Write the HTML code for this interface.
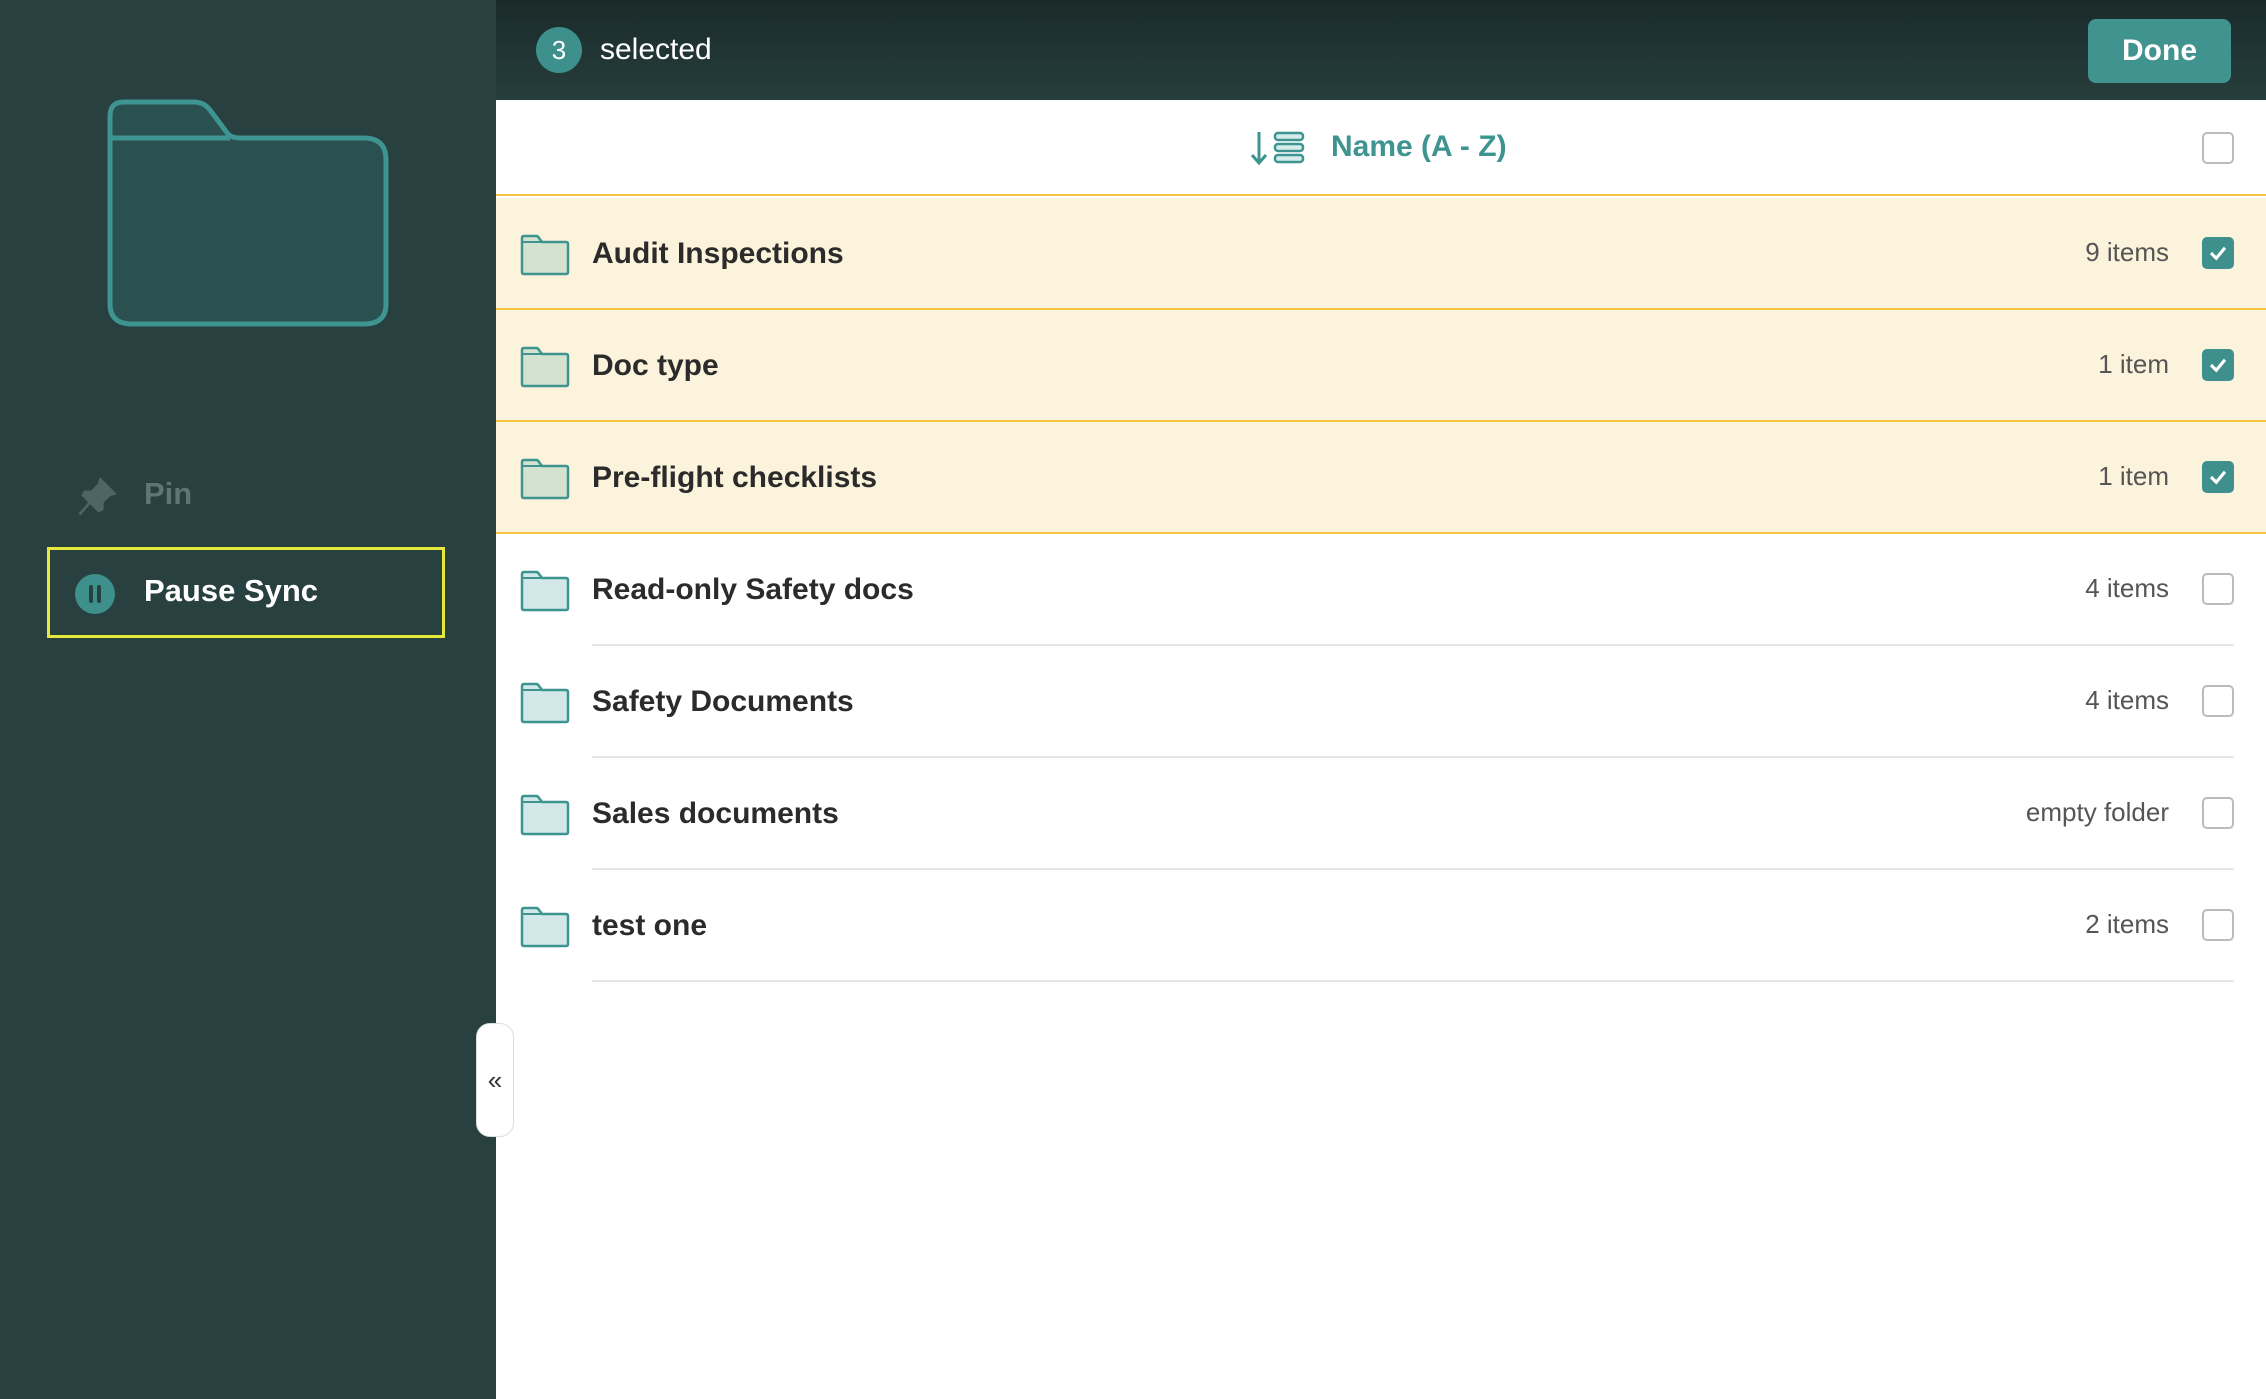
<!DOCTYPE html>
<html><head><meta charset="utf-8"><style>
*{margin:0;padding:0;box-sizing:border-box}
body{width:2266px;height:1399px;overflow:hidden;font-family:"Liberation Sans",sans-serif;background:#fff;position:relative}
.side{position:absolute;left:0;top:0;width:496px;height:1399px;background:#28403f}
.hdr{position:absolute;left:496px;top:0;width:1770px;height:100px;background:linear-gradient(#1a2a29,#263e3d)}
.abs{position:absolute}
.row{position:absolute;left:496px;width:1770px;height:112px}
.sel{background:#fcf3dc;border-bottom:2px solid #f5c242}
.name{position:absolute;left:96px;top:0;line-height:112px;font-size:30px;font-weight:bold;color:#2b2b2b}
.cnt{position:absolute;right:97px;top:0;line-height:108px;font-size:26px;color:#555}
.cb{position:absolute;left:1706px;top:39px;width:32px;height:32px;border-radius:5px;border:2px solid #bbb;background:#fff}
.cb.on{background:#3e908c;border-color:#3e908c}
.fold{position:absolute;left:24px;top:36px}
.sep{position:absolute;left:96px;right:32px;bottom:0;height:2px;background:#e6e6e6}
</style></head><body>
<div class="side">
<svg class="abs" style="left:104px;top:98px" width="290" height="232" viewBox="0 0 290 232"><path d="M6 58 V18 Q6 4 20 4 H90 Q100 4 106 12 L124 36 Q128 40 136 40 H260 Q282 40 282 62 V206 Q282 226 260 226 H28 Q6 226 6 206 Z" fill="#2a5150" stroke="#3e9490" stroke-width="5"/><path d="M6 40 H126" stroke="#3e9490" stroke-width="5"/></svg>
<svg class="abs" style="left:76px;top:476px" width="42" height="42" viewBox="0 0 24 24"><path d="M14 2 L22 10 L19 11 L15 15 L15 19 L13 20 L4 11 L5 9 L9 9 L13 5 Z M8 15 L2 22" fill="#4d6664" stroke="#4d6664" stroke-width="1.5"/></svg>
<div class="abs" style="left:144px;top:476px;font-size:31px;color:#5d7674;font-weight:bold">Pin</div>
<div class="abs" style="left:47px;top:547px;width:398px;height:91px;border:3px solid #e6e83a"></div>
<div class="abs" style="left:75px;top:574px;width:40px;height:40px;border-radius:50%;background:#3e908c"></div>
<div class="abs" style="left:89px;top:585px;width:4px;height:18px;background:#28403f;border-radius:2px"></div>
<div class="abs" style="left:97px;top:585px;width:4px;height:18px;background:#28403f;border-radius:2px"></div>
<div class="abs" style="left:144px;top:573px;font-size:31px;color:#fff;font-weight:bold">Pause Sync</div>
</div>
<div class="hdr">
<div class="abs" style="left:40px;top:27px;width:46px;height:46px;border-radius:50%;background:#3e908c;color:#fff;font-size:26px;text-align:center;line-height:46px">3</div>
<div class="abs" style="left:104px;top:33px;font-size:30px;color:#fff">selected</div>
<div class="abs" style="left:1592px;top:19px;width:143px;height:64px;border-radius:8px;background:#41938f;color:#fff;font-size:30px;font-weight:bold;text-align:center;line-height:64px">Done</div>
</div>
<div class="abs" style="left:496px;top:100px;width:1770px;height:96px;background:#fff;border-bottom:2px solid #f5c242">
<svg class="abs" style="left:753px;top:30px" width="60" height="36" viewBox="0 0 60 36"><path d="M10 2 V32 M3 25 L10 33 L17 25" fill="none" stroke="#3e9490" stroke-width="3"/><rect x="26" y="3" width="28" height="7" rx="3" fill="#d6ecea" stroke="#3e9490" stroke-width="2.5"/><rect x="26" y="14" width="28" height="7" rx="3" fill="#d6ecea" stroke="#3e9490" stroke-width="2.5"/><rect x="26" y="25" width="28" height="7" rx="3" fill="#d6ecea" stroke="#3e9490" stroke-width="2.5"/></svg>
<div class="abs" style="left:835px;top:30px;font-size:30px;font-weight:bold;color:#3e9490">Name (A - Z)</div>
<div class="cb" style="top:32px"></div>
</div>
<svg width="0" height="0" style="position:absolute"><defs>
<symbol id="fs" viewBox="0 0 50 42"><path d="M2 10 V4 Q2 2 4 2 H16 Q18 2 19 4 L22 8 H46 Q48 8 48 10 V38 Q48 40 46 40 H4 Q2 40 2 38 Z" fill="#d4e3cf" stroke="#3e9490" stroke-width="2.5"/><path d="M2 8 H21" stroke="#3e9490" stroke-width="2"/></symbol>
<symbol id="fu" viewBox="0 0 50 42"><path d="M2 10 V4 Q2 2 4 2 H16 Q18 2 19 4 L22 8 H46 Q48 8 48 10 V38 Q48 40 46 40 H4 Q2 40 2 38 Z" fill="#d3e9e9" stroke="#3e9490" stroke-width="2.5"/><path d="M2 8 H21" stroke="#3e9490" stroke-width="2"/></symbol>
<symbol id="ck" viewBox="0 0 32 32"><path d="M8 16 L14 22 L24 10" fill="none" stroke="#fff" stroke-width="3.5"/></symbol>
</defs></svg>
<div class="row sel" style="top:198px"><svg class="fold" width="50" height="42"><use href="#fs"/></svg><div class="name">Audit Inspections</div><div class="cnt">9 items</div><div class="cb on"><svg width="28" height="28"><use href="#ck"/></svg></div></div>
<div class="row sel" style="top:310px"><svg class="fold" width="50" height="42"><use href="#fs"/></svg><div class="name">Doc type</div><div class="cnt">1 item</div><div class="cb on"><svg width="28" height="28"><use href="#ck"/></svg></div></div>
<div class="row sel" style="top:422px"><svg class="fold" width="50" height="42"><use href="#fs"/></svg><div class="name">Pre-flight checklists</div><div class="cnt">1 item</div><div class="cb on"><svg width="28" height="28"><use href="#ck"/></svg></div></div>
<div class="row" style="top:534px"><svg class="fold" width="50" height="42"><use href="#fu"/></svg><div class="name">Read-only Safety docs</div><div class="cnt">4 items</div><div class="cb"></div><div class="sep"></div></div>
<div class="row" style="top:646px"><svg class="fold" width="50" height="42"><use href="#fu"/></svg><div class="name">Safety Documents</div><div class="cnt">4 items</div><div class="cb"></div><div class="sep"></div></div>
<div class="row" style="top:758px"><svg class="fold" width="50" height="42"><use href="#fu"/></svg><div class="name">Sales documents</div><div class="cnt">empty folder</div><div class="cb"></div><div class="sep"></div></div>
<div class="row" style="top:870px"><svg class="fold" width="50" height="42"><use href="#fu"/></svg><div class="name">test one</div><div class="cnt">2 items</div><div class="cb"></div><div class="sep"></div></div>
<div class="abs" style="left:476px;top:1023px;width:38px;height:114px;background:#fff;border-radius:14px;border:1px solid #ddd;font-size:26px;color:#333;text-align:center;line-height:112px">«</div>
</body></html>
